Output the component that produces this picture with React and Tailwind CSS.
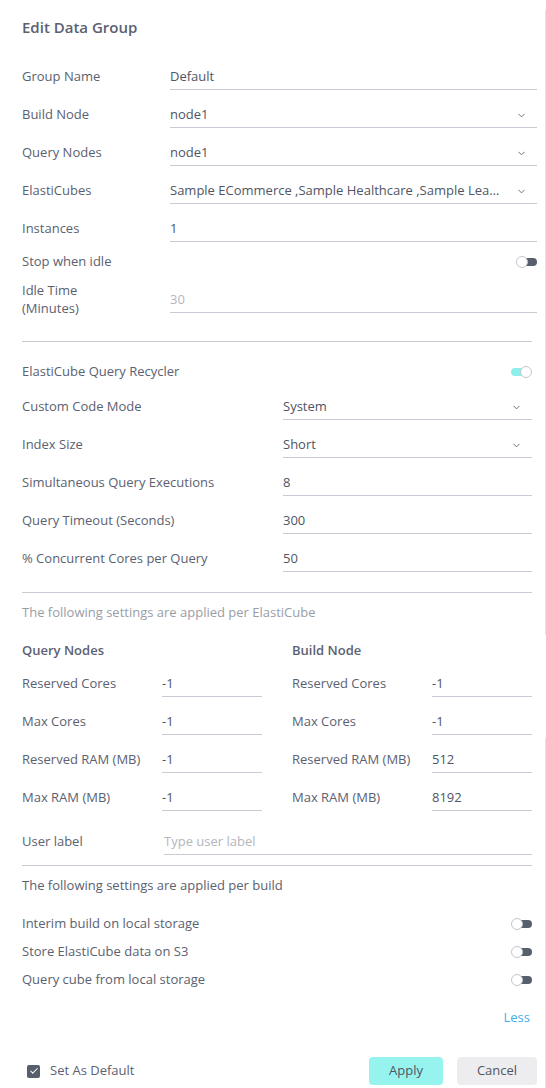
import { Check, ChevronDown } from 'lucide-react'

const font = { fontFamily: '"Open Sans", "Liberation Sans", sans-serif' }

function Toggle({ on = false }) {
  return (
    <div className="relative h-[12px] w-[21px]">
      <div
        className={
          on
            ? 'absolute left-0 top-[2px] h-[8px] w-[19px] rounded-full bg-[#8ef0ea]'
            : 'absolute left-[2px] top-[2px] h-[8px] w-[19px] rounded-full bg-[#575e6c]'
        }
      />
      <div
        className={
          on
            ? 'absolute right-0 top-0 h-[12px] w-[12px] rounded-full border border-[#c4c6cf] bg-white'
            : 'absolute left-0 top-0 h-[12px] w-[12px] rounded-full border border-[#c4c6cf] bg-white'
        }
      />
    </div>
  )
}

function Field({ value, select, muted, placeholder }) {
  return (
    <div className="flex h-[27px] min-w-0 flex-1 items-center border-b border-[#c9cad4]">
      <span
        className={
          placeholder || muted
            ? 'flex-1 truncate pt-px text-[#b4b6bd]'
            : 'flex-1 truncate pt-px text-[#4f5563]'
        }
      >
        {value || placeholder}
      </span>
      {select && <ChevronDown size={11} strokeWidth={2} className="mr-[10px] ml-3 mt-[3px] shrink-0 text-[#5f6573]" />}
    </div>
  )
}

function Row({ label, labelW, className = '', ...field }) {
  return (
    <div className={`flex items-center ${className}`}>
      <div className="shrink-0 text-[#5b6170]" style={{ width: labelW }}>
        {label}
      </div>
      <Field {...field} />
    </div>
  )
}

function ToggleRow({ label, on, className = '' }) {
  return (
    <div className={`flex h-[20px] items-center justify-between ${className}`}>
      <span className="text-[#5b6170]">{label}</span>
      <Toggle on={on} />
    </div>
  )
}

const queryNodeRows = [
  ['Reserved Cores', '-1', 'Reserved Cores', '-1'],
  ['Max Cores', '-1', 'Max Cores', '-1'],
  ['Reserved RAM (MB)', '-1', 'Reserved RAM (MB)', '512'],
  ['Max RAM (MB)', '-1', 'Max RAM (MB)', '8192'],
]

export default function App() {
  return (
    <div className="min-h-[1088px] w-[546px] bg-white" style={font}>
      <div className="relative pl-[22px] pr-[14px] pt-[17px] text-[13px]">
        <div className="pointer-events-none absolute right-0 top-[10px] h-[625px] w-px bg-[#e3e3e8]" />
        <div className="pointer-events-none absolute right-0 top-[738px] h-[350px] w-px bg-[#e3e3e8]" />

        <h1 className="h-[20px] text-[15px] font-semibold leading-[20px] text-[#5b6170]">Edit Data Group</h1>

        <div className="mr-[-5px] mt-[26px] flex flex-col gap-[11px]">
          <Row label="Group Name" labelW={148} value="Default" />
          <Row label="Build Node" labelW={148} value="node1" select />
          <Row label="Query Nodes" labelW={148} value="node1" select />
          <Row
            label="ElastiCubes"
            labelW={148}
            value="Sample ECommerce ,Sample Healthcare ,Sample Lead Generation"
            select
          />
          <Row label="Instances" labelW={148} value="1" />
        </div>

        <div className="mr-[-5px]">
          <ToggleRow label="Stop when idle" className="mt-[10px]" />
          <div className="mt-[9px] flex">
            <div className="w-[148px] shrink-0 leading-[18px] text-[#5b6170]">
              Idle Time
              <br />
              (Minutes)
            </div>
            <div className="mt-[5px] flex flex-1">
              <Field value="30" muted />
            </div>
          </div>
        </div>

        <div className="mt-[24px] h-px bg-[#c9cad4]" />

        <ToggleRow label="ElastiCube Query Recycler" on className="mt-[20px]" />

        <div className="mt-[11px] flex flex-col gap-[11px]">
          <Row label="Custom Code Mode" labelW={261} value="System" select />
          <Row label="Index Size" labelW={261} value="Short" select />
          <Row label="Simultaneous Query Executions" labelW={261} value="8" />
          <Row label="Query Timeout (Seconds)" labelW={261} value="300" />
          <Row label="% Concurrent Cores per Query" labelW={261} value="50" />
        </div>

        <div className="mt-[20px] h-px bg-[#c9cad4]" />

        <p className="mt-[9px] h-[20px] leading-[20px] text-[#9a9da6]">
          The following settings are applied per ElastiCube
        </p>

        <div className="mt-[18px] grid grid-cols-2 gap-x-[30px]">
          <div className="h-[20px] font-semibold leading-[20px] text-[#5b6170]">Query Nodes</div>
          <div className="h-[20px] font-semibold leading-[20px] text-[#5b6170]">Build Node</div>
        </div>

        <div className="mt-[10px] flex flex-col gap-[11px]">
          {queryNodeRows.map(([l1, v1, l2, v2]) => (
            <div key={l1} className="grid grid-cols-2 gap-x-[30px]">
              <Row label={l1} labelW={140} value={v1} />
              <Row label={l2} labelW={140} value={v2} />
            </div>
          ))}
        </div>

        <Row label="User label" labelW={142} placeholder="Type user label" className="mt-[17px]" />

        <div className="mt-[10px] h-px bg-[#c9cad4]" />

        <p className="mt-[9px] h-[20px] leading-[20px] text-[#5b6170]">The following settings are applied per build</p>

        <ToggleRow label="Interim build on local storage" className="mt-[19px]" />
        <ToggleRow label="Store ElastiCube data on S3" className="mt-[8px]" />
        <ToggleRow label="Query cube from local storage" className="mt-[8px]" />

        <div className="mt-[18px] flex h-[20px] items-center justify-end pr-[2px]">
          <span className="text-[#3fb0e8]">Less</span>
        </div>

        <div className="mr-[-5px] mt-[29px] flex h-[28px] items-center">
          <div className="ml-[5px] flex h-[13px] w-[13px] items-center justify-center rounded-[2px] bg-[#575e6c]">
            <Check size={10} strokeWidth={2.5} className="text-white" />
          </div>
          <span className="ml-[10px] text-[#5b6170]">Set As Default</span>
          <button className="ml-auto h-[28px] w-[74px] rounded-[4px] bg-[#96f3ee] text-[13px] text-[#4f5563]">
            Apply
          </button>
          <button className="ml-[14px] h-[28px] w-[80px] rounded-[4px] bg-[#ededf0] text-[13px] text-[#4f5563]">
            Cancel
          </button>
        </div>
      </div>
    </div>
  )
}
